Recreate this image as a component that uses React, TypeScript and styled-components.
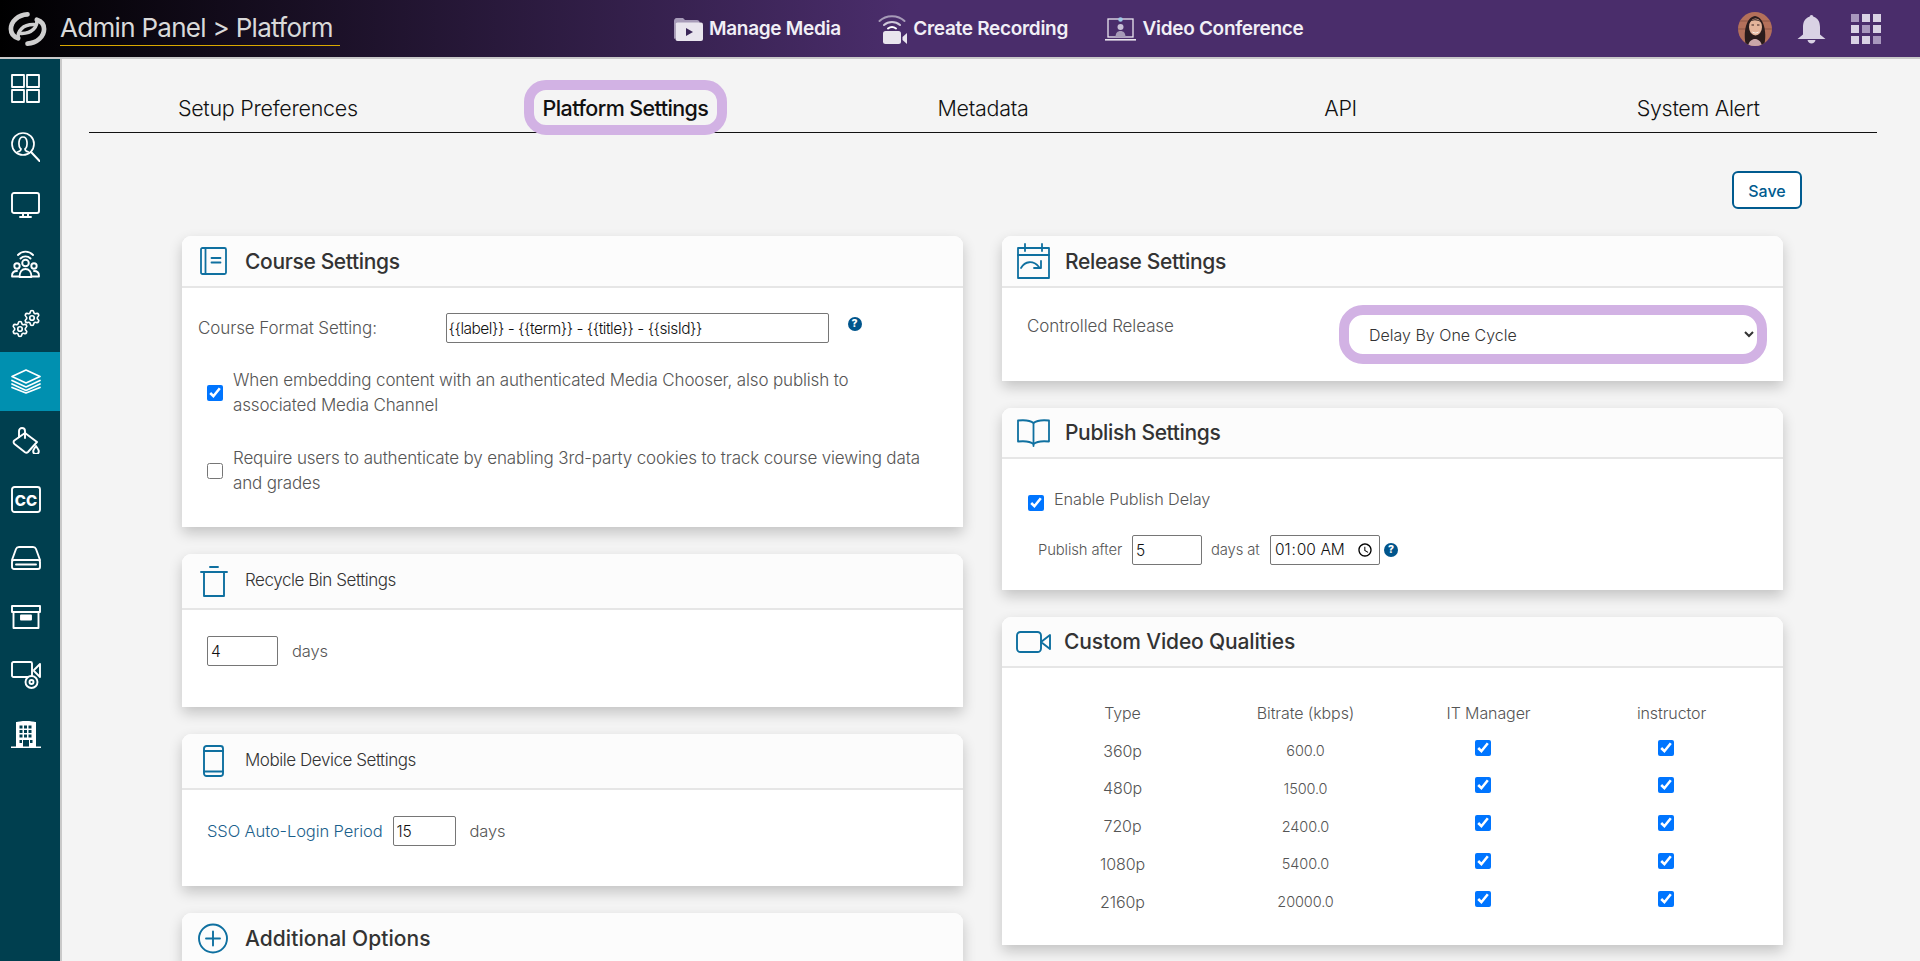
import React from "react";
import styled, { createGlobalStyle } from "styled-components";
import { Settings } from "lucide-react";

const FONT = `Inter, "Noto Sans", "Liberation Sans", sans-serif`;
const TEAL = "#0f70a0";

const Global = createGlobalStyle`
  html, body { margin: 0; padding: 0; height: 961px; overflow: hidden; background: #f4f4f4; }
  body { font-family: ${FONT}; }
  #root { height: 961px; overflow: hidden; }
  * { box-sizing: border-box; }
`;

const Shell = styled.div`
  display: flex;
  flex-direction: column;
  height: 961px;
  overflow: hidden;
`;

const Header = styled.header`
  position: relative;
  z-index: 3;
  flex: none;
  height: 59px;
  border-bottom: 2px solid #c9c9c9;
  background: linear-gradient(90deg, #000 0, #4a2d6b 900px);
  background-clip: padding-box;
  display: flex;
  align-items: center;
  padding: 0 39px 0 8px;
`;

const Brand = styled.div`
  display: flex;
  align-items: center;
  gap: 13px;
  width: 665px;
  flex: none;
`;

const BrandTitle = styled.div`
  width: 280px;
  height: 34px;
  margin-top: 1px;
  border-bottom: 1px solid #d9a800;
  color: #d9d9d9;
  font-size: 26px;
  line-height: 31px;
  font-weight: 400;
  letter-spacing: -0.7px;
  white-space: nowrap;
`;

const Nav = styled.nav`
  display: flex;
  align-items: center;
  gap: 37.5px;
`;

const NavItem = styled.div`
  display: flex;
  align-items: center;
  gap: 6px;
  color: #f1eff6;
  font-size: 19px;
  font-weight: 600;
  letter-spacing: -0.3px;
  white-space: nowrap;
`;

const HeaderTools = styled.div`
  margin-left: auto;
  display: flex;
  align-items: center;
  gap: 25px;
`;

const AppDots = styled.div`
  display: grid;
  grid-template-columns: repeat(3, 8px);
  grid-auto-rows: 8px;
  gap: 3px;
`;

const AppDot = styled.span<{ $dim?: boolean }>`
  background: ${(p) => (p.$dim ? "#a897bd" : "#d9d2e4")};
`;

const Body = styled.div`
  flex: 1;
  min-height: 0;
  display: flex;
`;

const Sidebar = styled.aside`
  flex: none;
  width: 62px;
  background: #003f4f;
  border-right: 2px solid #c9c9c9;
  display: flex;
  flex-direction: column;
`;

const SideItem = styled.div<{ $active?: boolean }>`
  flex: none;
  height: 58.7px;
  padding-right: 9px;
  display: flex;
  align-items: center;
  justify-content: center;
  color: #fff;
  background: ${(p) => (p.$active ? "#0090b0" : "transparent")};
`;

const Main = styled.main`
  flex: 1;
  min-width: 0;
  padding: 21px 43px 0 27px;
  overflow: hidden;
`;

const TabBar = styled.div`
  display: flex;
  height: 53px;
  border-bottom: 1.5px solid #111;
`;

const Tab = styled.div`
  flex: 1;
  height: 55px;
  position: relative;
  display: flex;
  justify-content: center;
`;

const TabLabel = styled.span<{ $active?: boolean }>`
  height: 55px;
  padding: 0 9px;
  border: 10px solid ${(p) => (p.$active ? "#d2b2e4" : "transparent")};
  border-radius: 22px;
  background: ${(p) => (p.$active ? "#f4f4f4" : "transparent")};
  color: #111;
  font-size: 21.5px;
  line-height: 37px;
  font-weight: ${(p) => (p.$active ? 500 : 300)};
  letter-spacing: ${(p) => (p.$active ? -0.6 : -0.3)}px;
  white-space: nowrap;
`;

const SaveRow = styled.div`
  display: flex;
  justify-content: flex-end;
  padding: 38px 75px 0 0;
`;

const SaveButton = styled.button`
  width: 70px;
  height: 38px;
  background: #fff;
  border: 2px solid #005b8f;
  border-radius: 6px;
  color: #005b8f;
  font-family: ${FONT};
  font-size: 16px;
  line-height: 20px;
  font-weight: 500;
  padding: 1px 0 0;
`;

const Columns = styled.div`
  display: grid;
  grid-template-columns: 781px 781px;
  column-gap: 39px;
  margin: 27px 0 0 93px;
`;

const Column = styled.div`
  display: flex;
  flex-direction: column;
  gap: 27px;
`;

const Card = styled.section`
  background: #fff;
  border-radius: 9px 9px 0 0;
  box-shadow: 0 6px 14px rgba(0, 0, 0, 0.2);
  flex: none;
`;

const CardHead = styled.div<{ $h: number; $pad?: number }>`
  height: ${(p) => p.$h}px;
  background: #fcfcfc;
  border-radius: 9px 9px 0 0;
  border-bottom: 2px solid #e6e6e6;
  display: flex;
  align-items: center;
  padding-left: ${(p) => p.$pad ?? 14}px;
`;

const IconSlot = styled.div<{ $w: number }>`
  flex: none;
  width: ${(p) => p.$w}px;
  display: flex;
  align-items: center;
`;

const CardTitle = styled.h2<{ $spacing?: number }>`
  margin: 0;
  color: #333;
  font-size: 21px;
  font-weight: 500;
  letter-spacing: ${(p) => p.$spacing ?? -0.35}px;
  white-space: nowrap;
`;

const SmallTitle = styled.h3`
  margin: 0 0 2px;
  color: #333;
  font-size: 17px;
  font-weight: 300;
  letter-spacing: -0.45px;
  white-space: nowrap;
`;

const CardBody = styled.div<{ $h: number; $pad?: string }>`
  height: ${(p) => p.$h}px;
  padding: ${(p) => p.$pad ?? "0"};
  color: #555;
  font-size: 16.5px;
  font-weight: 300;
  letter-spacing: -0.1px;
`;

const FormatRow = styled.div`
  display: flex;
  align-items: center;
  padding-left: 16px;
  font-size: 17px;
`;

const FormatLabel = styled.label`
  flex: none;
  width: 247.5px;
`;

const TextField = styled.input<{ $w: number; $tight?: boolean }>`
  flex: none;
  width: ${(p) => p.$w}px;
  height: 30px;
  padding: 0 ${(p) => (p.$tight ? 2 : 3)}px;
  border: 1px solid #767676;
  border-radius: 2px;
  background: #fff;
  color: #111;
  font-family: ${FONT};
  font-size: 15.5px;
  font-weight: 300;
  letter-spacing: ${(p) => (p.$tight ? -0.5 : -0.1)}px;
  outline: none;
`;

const Help = styled.span<{ $up?: boolean }>`
  flex: none;
  width: 14px;
  height: 14px;
  border-radius: 50%;
  background: #00558c;
  color: #fff;
  font-size: 10.5px;
  font-weight: 800;
  line-height: 14px;
  text-align: center;
  letter-spacing: 0;
  margin-left: ${(p) => (p.$up ? "19px" : "4px")};
  margin-top: ${(p) => (p.$up ? "-9px" : "0")};
`;

const CheckRow = styled.label<{ $gap: number }>`
  display: flex;
  align-items: center;
  gap: 10px;
  margin: ${(p) => p.$gap}px 0 0 25px;
  width: 722px;
  font-size: 17px;
  letter-spacing: -0.15px;
  line-height: 25px;
`;

const Check = styled.input.attrs({ type: "checkbox" })`
  flex: none;
  width: 16px;
  height: 16px;
  margin: 0;
  accent-color: #0075ff;
`;

const InlineRow = styled.div`
  display: flex;
  align-items: center;
  gap: 14px;
`;

const Link = styled.span`
  color: #1b5f8c;
  white-space: nowrap;
  margin-right: -4px;
`;

const ReleaseBody = styled.div`
  height: 93px;
  padding: 17px 0 0 25px;
  display: flex;
  color: #555;
  font-size: 17px;
  font-weight: 300;
  letter-spacing: -0.1px;
`;

const ReleaseLabel = styled.div`
  flex: none;
  width: 312px;
  padding-top: 11px;
`;

const SelectRing = styled.div`
  width: 428px;
  height: 59px;
  border: 10px solid #d2b2e4;
  border-radius: 24px;
  background: #fff;
  display: flex;
  align-items: center;
`;

const Select = styled.select`
  width: 100%;
  height: 100%;
  border: 0;
  background: transparent;
  border-radius: 14px;
  padding-left: 16px;
  padding-right: 4px;
  color: #333;
  font-family: ${FONT};
  font-size: 16px;
  font-weight: 300;
  outline: none;
`;

const DelayRow = styled.label`
  display: flex;
  align-items: center;
  gap: 10px;
  margin-left: 26px;
  height: 24px;
  font-size: 16.3px;
`;

const DelayCheck = styled(Check)`
  margin-top: 8px;
`;

const PublishRow = styled.div`
  display: flex;
  align-items: center;
  margin: 24px 0 0 36px;
  font-size: 14.8px;
`;

const PublishText = styled.span<{ $w: number; $indent?: number }>`
  flex: none;
  width: ${(p) => p.$w}px;
  padding-left: ${(p) => p.$indent ?? 0}px;
  white-space: nowrap;
`;

const QualityGrid = styled.div`
  display: grid;
  grid-template-columns: repeat(4, 183px);
  grid-auto-rows: 37.75px;
  align-items: center;
  text-align: center;
  padding: 26px 0 0 29px;
`;

const Cell = styled.div<{ $small?: boolean }>`
  font-size: ${(p) => (p.$small ? "14.5px" : "16px")};
`;

const CheckCell = styled.div`
  display: flex;
  justify-content: center;
  padding-right: 12px;
  margin-top: -6px;
`;

const Stroke = (p: React.SVGProps<SVGSVGElement> & { w: number; h: number; sw?: number; color?: string }) => {
  const { w, h, sw = 1.6, color = "currentColor", children, ...rest } = p;
  return (
    <svg
      width={w}
      height={h}
      viewBox={`0 0 ${w} ${h}`}
      fill="none"
      stroke={color}
      strokeWidth={sw}
      strokeLinecap="round"
      strokeLinejoin="round"
      {...rest}
    >
      {children}
    </svg>
  );
};

const LogoPiece = () => (
  <>
    <path d="M20 3C10.500 3.500 3 10 3 18c0 4.500 3 8 7.500 9.500" strokeWidth="4.800" />
    <path d="M10.500 27.500C9.500 20.500 15 13 27 13.500" strokeWidth="3.600" />
  </>
);

const Logo = () => (
  <svg width="39" height="36" viewBox="0 0 40 36" fill="none" stroke="#cfcfcf" strokeLinecap="round">
    <LogoPiece />
    <g transform="rotate(180 20 18)">
      <LogoPiece />
    </g>
  </svg>
);

const MediaIcon = () => (
  <svg width="30" height="24" viewBox="0 0 30 24">
    <path d="M1 22V4c0-1.500 1-3 2.500-3H10l2 2h12c1.500 0 2.500 1 2.500 2v1H4.500C3 6 2.500 7 2.500 8.500V21z" fill="#a79bb8" />
    <rect x="2.500" y="5.500" width="27.500" height="18.500" rx="2" fill="#e9e5ee" />
    <path d="M13 11l7 4-7 4z" fill="#3b2658" />
  </svg>
);

const RecordIcon = () => (
  <svg width="29" height="30" viewBox="0 0 29 30" fill="none">
    <path d="M1.500 7C8 .5 20 .5 26.500 7" stroke="#a79bb8" strokeWidth="2" strokeLinecap="round" />
    <path d="M6 11c4.500-4 11.500-4 16 0" stroke="#cfc8da" strokeWidth="2" strokeLinecap="round" />
    <path d="M10 14.500c2.500-1.800 5.500-1.800 8 0" stroke="#fff" strokeWidth="2" strokeLinecap="round" />
    <rect x="5" y="17" width="18" height="13" rx="2.500" fill="#e9e5ee" />
    <path d="M24.500 23l4.500-4v11l-4.500-4z" fill="#e9e5ee" />
  </svg>
);

const ConferenceIcon = () => (
  <svg width="31" height="24" viewBox="0 0 31 24" fill="none">
    <rect x="3" y="2" width="25" height="18" stroke="#e9e5ee" strokeWidth="1.300" />
    <path d="M0 22.800h31" stroke="#e9e5ee" strokeWidth="1.600" />
    <circle cx="15.500" cy="2.500" r="2.300" fill="#9ec8e6" />
    <circle cx="15.500" cy="10" r="3" fill="#c8c0d6" />
    <path d="M10.500 20c0-4 2-6 5-6s5 2 5 6z" fill="#a79bb8" />
  </svg>
);

const Avatar = () => (
  <svg width="34" height="34" viewBox="0 0 34 34">
    <defs>
      <clipPath id="avatarClip">
        <circle cx="17" cy="17" r="17" />
      </clipPath>
    </defs>
    <g clipPath="url(#avatarClip)">
      <rect width="34" height="34" fill="#b4705a" />
      <path d="M0 9h34M0 17h8M26 17h8" stroke="#8d5646" strokeWidth="1" />
      <path d="M8 33C5 24 7 5 17 4c10 1 12 20 9 29z" fill="#2a1c1c" />
      <path d="M10 34c1-5 4-7 7-7s6 2 7 7z" fill="#caa6a8" />
      <ellipse cx="17.500" cy="15" rx="6.500" ry="8.500" fill="#e4b49a" />
      <path d="M11 11c2-3 8-4 13 0-3-5-11-5-13 0z" fill="#2a1c1c" />
      <path d="M14 19.500c2 1.500 5 1.500 7 0-.5 2.500-6.500 2.500-7 0z" fill="#fff" />
      <path d="M13.500 13h2.500M19 13h2.500" stroke="#3a2020" strokeWidth="1" />
    </g>
  </svg>
);

const Bell = () => (
  <svg width="29" height="30" viewBox="0 0 29 30" fill="#d9d2e4">
    <path d="M14.500 1c1 0 1.800.8 1.900 1.800C21 4 23 8 23 13v7.500l5.500 4.500H.5L6 20.500V13c0-5 2-9 6.600-10.200C12.700 1.800 13.500 1 14.500 1z" />
    <path d="M10.500 26h8c-.5 2.300-2 3.500-4 3.500s-3.500-1.200-4-3.500z" />
  </svg>
);

const IconGrid = () => (
  <Stroke w={29} h={29} sw={1.8}>
    <rect x="1" y="1" width="12" height="12" />
    <rect x="16" y="1" width="12" height="12" />
    <rect x="1" y="16" width="12" height="12" />
    <rect x="16" y="16" width="12" height="12" />
  </Stroke>
);

const IconSearchUser = () => (
  <Stroke w={29} h={30} sw={1.7}>
    <circle cx="12" cy="12" r="11" />
    <path d="M6.500 20c1.800-.5 3.500-1.200 3.500-3-3-2.500-3-12 2-12s5 9.500 2 12c0 1.800 1.700 2.500 3.500 3" />
    <path d="M20 20l8.500 9" strokeWidth="2" />
  </Stroke>
);

const IconMonitor = () => (
  <Stroke w={29} h={27} sw={1.9}>
    <rect x="1" y="1" width="27" height="20" rx="2" />
    <path d="M12 22v2M17 22v2M9 25h11" />
  </Stroke>
);

const IconGroup = () => (
  <Stroke w={29} h={28} sw={1.9}>
    <path d="M7 5c4-4.500 11-4.500 15 0M9.500 8.500c2.800-2.800 7.200-2.800 10 0" />
    <circle cx="14.500" cy="13" r="3.300" />
    <circle cx="6" cy="16" r="2.700" />
    <circle cx="23" cy="16" r="2.700" />
    <path d="M8.500 27c0-5 2.500-8 6-8s6 3 6 8zM1 26c0-3 2-5 5-5M28 26c0-3-2-5-5-5M1 26.500h7M21 26.500h7" />
  </Stroke>
);

const IconGears = () => (
  <svg width="30" height="29" viewBox="0 0 30 29">
    <Settings x={12} y={0} width={18} height={18} color="#fff" strokeWidth={2.2} />
    <Settings x={0} y={11} width={18} height={18} color="#fff" strokeWidth={2.2} />
  </svg>
);

const IconLayers = () => (
  <Stroke w={30} h={25} sw={1.7}>
    <path d="M15 1l14 6.500-14 6.500L1 7.500z" />
    <path d="M1 11.500l14 6.500 14-6.500M1 15l14 6.500L29 15M1 18.500l14 5.500 14-5.500" />
  </Stroke>
);

const IconPaint = () => (
  <Stroke w={28} h={28} sw={1.9}>
    <path d="M13 7l12 9-9 10c-1 1-2 1-3 .3L2.500 18c-1.200-1-1.200-2.500-.2-3.500z" />
    <path d="M7 11V5a3 3 0 016 0v7" />
    <path d="M24 20c-1.800 2.700-2.800 3.800-2.800 5.200a2.800 2.800 0 005.600 0c0-1.400-1-2.500-2.800-5.200z" />
  </Stroke>
);

const IconCC = () => (
  <svg width="30" height="27" viewBox="0 0 30 27" fill="none">
    <rect x="1" y="1" width="28" height="25" rx="2.500" stroke="#fff" strokeWidth="1.900" />
    <text x="15" y="19.500" textAnchor="middle" fill="#fff" fontFamily="Inter, sans-serif" fontSize="15" fontWeight="800">
      CC
    </text>
  </svg>
);

const IconDrive = () => (
  <Stroke w={30} h={24} sw={1.9}>
    <path d="M1 14L5 3c.5-1.300 1.300-2 3-2h14c1.700 0 2.500.7 3 2l4 11" />
    <rect x="1" y="14" width="28" height="9" rx="2" />
    <path d="M5 18.500h20" />
  </Stroke>
);

const IconArchive = () => (
  <Stroke w={30} h={24} sw={1.9}>
    <path d="M1 1h28v6H1zM2.500 7v16h25V7" />
    <path d="M10 10.500h10v4H10z" fill="#fff" />
  </Stroke>
);

const IconVideoReel = () => (
  <Stroke w={30} h={28} sw={1.9}>
    <rect x="1" y="1" width="20" height="15" rx="1.500" />
    <path d="M23 9l6-6v13l-6-6" />
    <circle cx="20.500" cy="21" r="6" fill="#003f4f" />
    <circle cx="20.500" cy="21" r="2" />
  </Stroke>
);

const IconBuilding = () => (
  <svg width="30" height="29" viewBox="0 0 30 29">
    <path d="M5 3.500C8 1.500 22 1.500 25 3.500z" fill="#fff" />
    <rect x="5" y="3" width="20" height="25" fill="#fff" />
    {[8.5, 13, 17.5].map((x) =>
      [6.5, 11, 15.5].map((y) => <rect key={`${x}-${y}`} x={x} y={y} width="3" height="3" fill="#003f4f" />)
    )}
    <rect x="12" y="21" width="6" height="7" fill="#003f4f" />
    <rect x="8.500" y="21" width="2.500" height="3" fill="#003f4f" />
    <rect x="19" y="21" width="2.500" height="3" fill="#003f4f" />
    <rect x="0" y="27.500" width="30" height="1.500" fill="#fff" />
  </svg>
);

const IconBook = () => (
  <Stroke w={27} h={28} sw={1.800} color={TEAL}>
    <rect x="1" y="1" width="25" height="26" rx="1.500" />
    <path d="M5.500 1v26M11.500 11h9M11.500 15.500h9" />
  </Stroke>
);

const IconTrash = () => (
  <Stroke w={28} h={31} sw={1.900} color={TEAL}>
    <path d="M1 6h26M10 1h8" />
    <path d="M4 6v24h20V6" />
  </Stroke>
);

const IconPhone = () => (
  <Stroke w={21} h={32} sw={1.900} color={TEAL}>
    <rect x="1" y="1" width="19" height="30" rx="2.500" />
    <path d="M1 6h19M1 26.500h19" />
  </Stroke>
);

const IconPlus = () => (
  <Stroke w={30} h={31} sw={1.900} color={TEAL}>
    <circle cx="15" cy="15.500" r="14" />
    <path d="M15 8.500v14M8 15.500h14" />
  </Stroke>
);

const IconCalendar = () => (
  <Stroke w={33} h={36} sw={1.800} color={TEAL}>
    <rect x="1" y="5" width="31" height="30" />
    <path d="M1 12h31M8 1v7M25 1v7" />
    <path d="M4 25c4-7 12-8 18-1" />
    <path d="M24 18v7h-7" />
  </Stroke>
);

const IconOpenBook = () => (
  <Stroke w={33} h={28} sw={1.800} color={TEAL}>
    <path d="M16.500 4C13 1 6 1 1 1.500v21c5-.5 12-.5 15.500 2.500 3.500-3 10.500-3 15.500-2.500v-21C27 1 20 1 16.500 4z" />
    <path d="M16.500 4v23" />
  </Stroke>
);

const IconCamera = () => (
  <Stroke w={35} h={22} sw={1.900} color={TEAL}>
    <rect x="1" y="1" width="24" height="20" rx="3.500" />
    <path d="M25 11l9-7v14z" />
  </Stroke>
);

const sideIcons: React.ReactNode[] = [
  <IconGrid />,
  <IconSearchUser />,
  <IconMonitor />,
  <IconGroup />,
  <IconGears />,
  <IconLayers />,
  <IconPaint />,
  <IconCC />,
  <IconDrive />,
  <IconArchive />,
  <IconVideoReel />,
  <IconBuilding />,
];

const tabs = ["Setup Preferences", "Platform Settings", "Metadata", "API", "System Alert"];
const qualities = [
  ["360p", "600.0"],
  ["480p", "1500.0"],
  ["720p", "2400.0"],
  ["1080p", "5400.0"],
  ["2160p", "20000.0"],
];
const dimDots = [0, 4, 8];

export default function App() {
  return (
    <Shell>
      <Global />
      <Header>
        <Brand>
          <Logo />
          <BrandTitle>Admin Panel &gt; Platform</BrandTitle>
        </Brand>
        <Nav>
          <NavItem>
            <MediaIcon />
            Manage Media
          </NavItem>
          <NavItem>
            <RecordIcon />
            Create Recording
          </NavItem>
          <NavItem>
            <ConferenceIcon />
            Video Conference
          </NavItem>
        </Nav>
        <HeaderTools>
          <Avatar />
          <Bell />
          <AppDots>
            {Array.from({ length: 9 }, (_, i) => (
              <AppDot key={i} $dim={dimDots.includes(i)} />
            ))}
          </AppDots>
        </HeaderTools>
      </Header>
      <Body>
        <Sidebar>
          {sideIcons.map((icon, i) => (
            <SideItem key={i} $active={i === 5}>
              {icon}
            </SideItem>
          ))}
        </Sidebar>
        <Main>
          <TabBar>
            {tabs.map((t) => (
              <Tab key={t}>
                <TabLabel $active={t === "Platform Settings"}>{t}</TabLabel>
              </Tab>
            ))}
          </TabBar>
          <SaveRow>
            <SaveButton>Save</SaveButton>
          </SaveRow>
          <Columns>
            <Column>
              <Card>
                <CardHead $h={52} $pad={18}>
                  <IconSlot $w={45}>
                    <IconBook />
                  </IconSlot>
                  <CardTitle>Course Settings</CardTitle>
                </CardHead>
                <CardBody $h={239} $pad="25px 0 0">
                  <FormatRow>
                    <FormatLabel>Course Format Setting:</FormatLabel>
                    <TextField $w={383} $tight defaultValue="{{label}} - {{term}} - {{title}} - {{sisId}}" />
                    <Help $up>?</Help>
                  </FormatRow>
                  <CheckRow $gap={25}>
                    <Check defaultChecked />
                    <span>When embedding content with an authenticated Media Chooser, also publish to associated Media Channel</span>
                  </CheckRow>
                  <CheckRow $gap={28}>
                    <Check />
                    <span>Require users to authenticate by enabling 3rd-party cookies to track course viewing data and grades</span>
                  </CheckRow>
                </CardBody>
              </Card>
              <Card>
                <CardHead $h={56} $pad={18}>
                  <IconSlot $w={45}>
                    <IconTrash />
                  </IconSlot>
                  <SmallTitle>Recycle Bin Settings</SmallTitle>
                </CardHead>
                <CardBody $h={97} $pad="26px 0 0 25px">
                  <InlineRow>
                    <TextField $w={71} defaultValue="4" />
                    <span>days</span>
                  </InlineRow>
                </CardBody>
              </Card>
              <Card>
                <CardHead $h={56} $pad={21}>
                  <IconSlot $w={42}>
                    <IconPhone />
                  </IconSlot>
                  <SmallTitle>Mobile Device Settings</SmallTitle>
                </CardHead>
                <CardBody $h={96} $pad="26px 0 0 25px">
                  <InlineRow>
                    <Link>SSO Auto-Login Period</Link>
                    <TextField $w={63} defaultValue="15" />
                    <span>days</span>
                  </InlineRow>
                </CardBody>
              </Card>
              <Card>
                <CardHead $h={52} $pad={16}>
                  <IconSlot $w={47}>
                    <IconPlus />
                  </IconSlot>
                  <CardTitle $spacing={0.05}>Additional Options</CardTitle>
                </CardHead>
              </Card>
            </Column>
            <Column>
              <Card>
                <CardHead $h={52} $pad={15}>
                  <IconSlot $w={48}>
                    <IconCalendar />
                  </IconSlot>
                  <CardTitle>Release Settings</CardTitle>
                </CardHead>
                <ReleaseBody>
                  <ReleaseLabel>Controlled Release</ReleaseLabel>
                  <SelectRing>
                    <Select defaultValue="delay">
                      <option value="delay">Delay By One Cycle</option>
                    </Select>
                  </SelectRing>
                </ReleaseBody>
              </Card>
              <Card>
                <CardHead $h={51} $pad={15}>
                  <IconSlot $w={48}>
                    <IconOpenBook />
                  </IconSlot>
                  <CardTitle>Publish Settings</CardTitle>
                </CardHead>
                <CardBody $h={131} $pad="28px 0 0">
                  <DelayRow>
                    <DelayCheck defaultChecked />
                    <span>Enable Publish Delay</span>
                  </DelayRow>
                  <PublishRow>
                    <PublishText $w={94}>Publish after</PublishText>
                    <TextField $w={70} defaultValue="5" />
                    <PublishText $w={68} $indent={9}>
                      days at
                    </PublishText>
                    <TextField as="input" type="time" $w={110} defaultValue="01:00" />
                    <Help>?</Help>
                  </PublishRow>
                </CardBody>
              </Card>
              <Card>
                <CardHead $h={51} $pad={14}>
                  <IconSlot $w={48}>
                    <IconCamera />
                  </IconSlot>
                  <CardTitle $spacing={-0.15}>Custom Video Qualities</CardTitle>
                </CardHead>
                <CardBody $h={277}>
                  <QualityGrid>
                    <Cell>Type</Cell>
                    <Cell>Bitrate (kbps)</Cell>
                    <Cell>IT Manager</Cell>
                    <Cell>instructor</Cell>
                    {qualities.map(([type, rate]) => (
                      <React.Fragment key={type}>
                        <Cell>{type}</Cell>
                        <Cell $small>{rate}</Cell>
                        <CheckCell>
                          <Check defaultChecked />
                        </CheckCell>
                        <CheckCell>
                          <Check defaultChecked />
                        </CheckCell>
                      </React.Fragment>
                    ))}
                  </QualityGrid>
                </CardBody>
              </Card>
            </Column>
          </Columns>
        </Main>
      </Body>
    </Shell>
  );
}
